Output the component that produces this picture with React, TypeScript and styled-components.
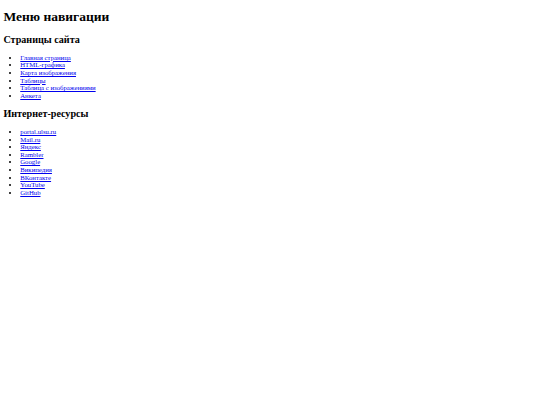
import React from 'react';
import styled, { createGlobalStyle } from 'styled-components';

// The reference is a 1280px-wide default-styled page shrunk to 540px.
const SCALE = 540 / 1280;

const GlobalStyle = createGlobalStyle`
  html, body {
    margin: 0;
    padding: 0;
    background: #ffffff;
  }
`;

const Page = styled.div`
  zoom: ${SCALE};
  padding: 8px;
  font-family: 'Liberation Serif', 'Times New Roman', serif;
  font-size: 16px;
  color: #000000;
  display: flow-root;
`;

const Title = styled.h1`
  font-size: 32px;
  line-height: 37px;
  font-weight: bold;
  margin: 13.44px 0 21.44px;
`;

const SectionTitle = styled.h2`
  font-size: 24px;
  line-height: 28px;
  font-weight: bold;
  margin: 19.92px 0;
`;

const LinkList = styled.ul`
  list-style: disc;
  margin: 16px 0;
  padding-left: 40px;
`;

const Item = styled.li`
  line-height: 18px;
`;

const NavLink = styled.a`
  color: #0000ee;
  text-decoration: underline;
`;

const sitePages = [
  'Главная страница',
  'HTML-графика',
  'Карта изображения',
  'Таблицы',
  'Таблица с изображениями',
  'Анкета',
];

const resources = [
  'portal.ulsu.ru',
  'Mail.ru',
  'Яндекс',
  'Rambler',
  'Google',
  'Википедия',
  'ВКонтакте',
  'YouTube',
  'GitHub',
];

export default function App() {
  return (
    <>
      <GlobalStyle />
      <Page>
        <Title>Меню навигации</Title>
        <SectionTitle>Страницы сайта</SectionTitle>
        <LinkList>
          {sitePages.map((name) => (
            <Item key={name}>
              <NavLink href="#">{name}</NavLink>
            </Item>
          ))}
        </LinkList>
        <SectionTitle>Интернет-ресурсы</SectionTitle>
        <LinkList>
          {resources.map((name) => (
            <Item key={name}>
              <NavLink href="#">{name}</NavLink>
            </Item>
          ))}
        </LinkList>
      </Page>
    </>
  );
}
